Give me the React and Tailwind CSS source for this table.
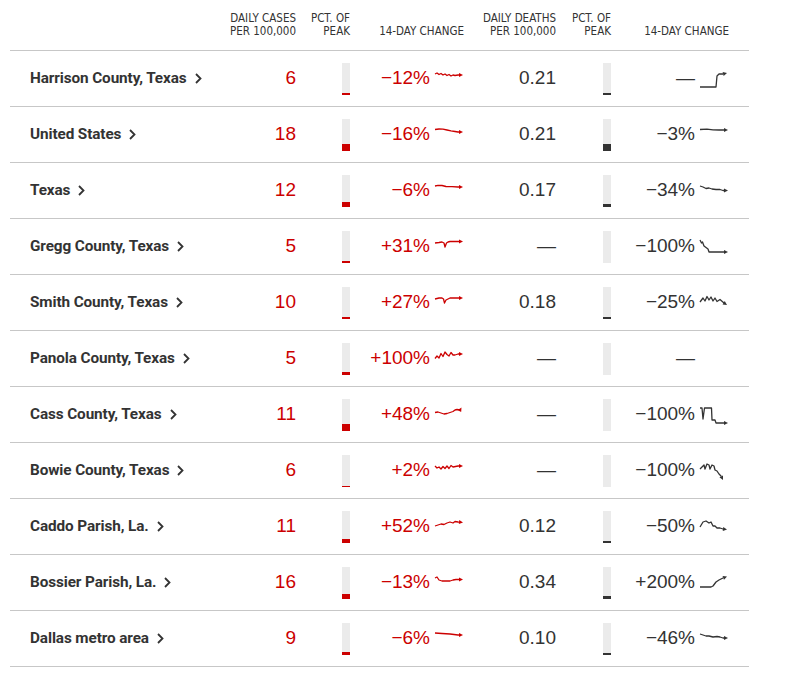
import React from "react";

const RED = "#cc0000";
const DARK = "#333333";

// pts in a 30x20 box, y=10 sits on the middle of the number beside it
const rows = [
  {
    name: "Harrison County, Texas", cases: "6", cp: 2, cc: "−12%",
    cs: [[1,5],[3,4],[5,5.5],[7,4.5],[9,6],[11,5],[13,6.5],[15,5.5],[17,7],[19,6],[21,6.5],[24,6],[29,6]],
    deaths: "0.21", dp: 2, dc: "—",
    ds: [[1,18],[17,18],[18,7],[20,5],[24,5],[28,4]],
  },
  {
    name: "United States", cases: "18", cp: 7, cc: "−16%",
    cs: [[1,4.5],[5,4],[9,4.2],[13,5],[17,5.8],[21,6.5],[24,7],[29,7]],
    deaths: "0.21", dp: 7, dc: "−3%",
    ds: [[1,4.5],[8,4.2],[14,4.8],[20,5],[24,5],[29,5]],
  },
  {
    name: "Texas", cases: "12", cp: 5, cc: "−6%",
    cs: [[1,5],[4,4.3],[8,4.5],[12,5.5],[18,5.6],[24,6],[29,6]],
    deaths: "0.17", dp: 3, dc: "−34%",
    ds: [[1,5],[4,6],[7,7.5],[10,7],[13,8],[17,8.5],[21,8.5],[24,9.5],[29,9.5]],
  },
  {
    name: "Gregg County, Texas", cases: "5", cp: 2, cc: "+31%",
    cs: [[1,6],[5,5.5],[8,5],[10,6],[11,10],[12.5,6],[14,5],[16,4.5],[24,4.5],[29,4.5]],
    deaths: "—", dp: 0, dc: "−100%",
    ds: [[1,3],[2.5,6],[3.5,5],[5,9],[7,10.5],[9,12],[10,15],[15,15],[24,15],[29,15]],
  },
  {
    name: "Smith County, Texas", cases: "10", cp: 2, cc: "+27%",
    cs: [[1,6],[5,5],[8,5],[9.5,6],[10.5,10],[12,7],[14,6],[16,5],[24,5],[29,5]],
    deaths: "0.18", dp: 2, dc: "−25%",
    ds: [[1,9],[4,5],[6,8],[8,3.5],[10,7],[12,4],[14,8],[16,5],[18,8.5],[21,6.5],[25,10],[28,12]],
  },
  {
    name: "Panola County, Texas", cases: "5", cp: 3, cc: "+100%",
    cs: [[1,9.5],[3,7],[5,9],[7,4.5],[9,7.5],[11,3],[13,5.5],[15,7],[17,3.5],[19,6],[21,6],[24,5],[29,5]],
    deaths: "—", dp: 0, dc: "—", ds: null,
  },
  {
    name: "Cass County, Texas", cases: "11", cp: 7, cc: "+48%",
    cs: [[1,7.5],[4,7],[7,8],[10,9],[13,8.5],[16,7.5],[19,6.5],[21,5],[23,4.5],[26,5],[27.5,2.5]],
    deaths: "—", dp: 0, dc: "−100%",
    ds: [[1,3],[3,3],[4,14],[5.5,3],[8,3],[12.5,3],[13,15],[16,15],[17,18],[24,18],[29,18]],
  },
  {
    name: "Bowie County, Texas", cases: "6", cp: 1, cc: "+2%",
    cs: [[1,5],[3,7],[5,6],[7,8],[9,5.5],[11,7.5],[13,5],[15,7.5],[17,4.5],[19,6],[24,5],[29,5]],
    deaths: "—", dp: 0, dc: "−100%",
    ds: [[1,8],[3,6],[5,4],[6,8],[8,3],[10,4],[11,8],[13,4],[15,5],[16,9],[18,10],[20,13],[22,15],[24,19]],
  },
  {
    name: "Caddo Parish, La.", cases: "11", cp: 4, cc: "+52%",
    cs: [[1,9],[4,8],[7,7],[10,7.5],[13,6],[16,5],[19,6],[21,4.5],[24,5],[29,5.5]],
    deaths: "0.12", dp: 2, dc: "−50%",
    ds: [[1,10],[4,5],[7,4],[10,6],[12,5],[14,9],[16,9],[18,11],[21,11],[24,12],[28,12.5]],
  },
  {
    name: "Bossier Parish, La.", cases: "16", cp: 5, cc: "−13%",
    cs: [[1,5],[3,4],[5,7],[8,8],[12,8],[16,8],[19,7],[22,6.5],[24,6.5],[29,6.5]],
    deaths: "0.34", dp: 3, dc: "+200%",
    ds: [[1,14],[12,14],[14,13],[17,9],[20,7],[24,5],[28,3.5]],
  },
  {
    name: "Dallas metro area", cases: "9", cp: 3, cc: "−6%",
    cs: [[1,4],[8,4.5],[16,5],[24,6],[29,6]],
    deaths: "0.10", dp: 2, dc: "−46%",
    ds: [[1,5],[4,6],[7,7],[10,7],[14,8],[18,7.5],[21,8],[24,9],[29,9]],
  },
];

function Spark({ pts, color }) {
  if (!pts) return <div className="w-[30px] h-5" />;
  const [x1, y1] = pts[pts.length - 2];
  const [x2, y2] = pts[pts.length - 1];
  const dx = x2 - x1;
  const dy = y2 - y1;
  const l = Math.hypot(dx, dy) || 1;
  const ux = dx / l;
  const uy = dy / l;
  const bx = x2 - ux * 4;
  const by = y2 - uy * 4;
  const head = `${x2},${y2} ${bx - uy * 2},${by + ux * 2} ${bx + uy * 2},${by - ux * 2}`;
  const line = pts.slice(0, -1).map((p) => p.join(",")).join(" ") + ` ${bx},${by}`;
  return (
    <svg width="30" height="20" viewBox="0 0 30 20" className="shrink-0 overflow-visible">
      <polyline points={line} fill="none" stroke={color} strokeWidth="1.3" strokeLinejoin="round" />
      <polygon points={head} fill={color} />
    </svg>
  );
}

function Bar({ h, color }) {
  return (
    <div className="flex flex-col justify-end w-2 h-8 bg-[#ebebeb]">
      <div style={{ height: h, background: color }} />
    </div>
  );
}

function Chevron() {
  return (
    <svg width="7" height="11" viewBox="0 0 7 11" className="shrink-0">
      <polyline points="1,1 5.5,5.5 1,10" fill="none" stroke="#333" strokeWidth="1.8" />
    </svg>
  );
}

const narrow = "font-['DejaVu_Sans_Condensed',sans-serif]";
const cols = "grid grid-cols-[200px_86px_54px_114px_92px_55px_118px_20px]";

export default function App() {
  return (
    <div className="bg-white min-h-[673px] w-[785px] font-['Liberation_Sans',sans-serif]">
      <div className="ml-[10px] w-[739px]">
        <div className={`${cols} h-[51px] border-b border-[#c7c7c7] pb-[12px] items-end text-[11.5px] leading-[13px] text-[#333] uppercase text-right ${narrow}`}>
          <div />
          <div>Daily cases<br />per 100,000</div>
          <div>Pct. of<br />peak</div>
          <div>14-day change</div>
          <div>Daily deaths<br />per 100,000</div>
          <div>Pct. of<br />peak</div>
          <div>14-day change</div>
          <div />
        </div>
        {rows.map((r) => (
          <div key={r.name} className={`${cols} h-[56px] border-b border-[#c7c7c7] items-center`}>
            <div className="pl-5 flex items-center gap-2 whitespace-nowrap text-[15.3px] font-bold tracking-[-0.1px] text-[#333] font-['Roboto',sans-serif]">
              <span>{r.name}</span>
              <Chevron />
            </div>
            <div className="text-right text-[19px] text-[#cc0000]">{r.cases}</div>
            <div className="flex justify-end">
              <Bar h={r.cp} color={RED} />
            </div>
            <div className="flex justify-end items-center gap-1 text-[19px] text-[#cc0000]">
              <span>{r.cc}</span>
              <Spark pts={r.cs} color={RED} />
            </div>
            <div className="text-right text-[19px] text-[#333]">{r.deaths}</div>
            <div className="flex justify-end">
              <Bar h={r.dp} color={DARK} />
            </div>
            <div className="flex justify-end items-center gap-1 text-[19px] text-[#333]">
              <span>{r.dc}</span>
              <Spark pts={r.ds} color={DARK} />
            </div>
            <div />
          </div>
        ))}
      </div>
    </div>
  );
}
